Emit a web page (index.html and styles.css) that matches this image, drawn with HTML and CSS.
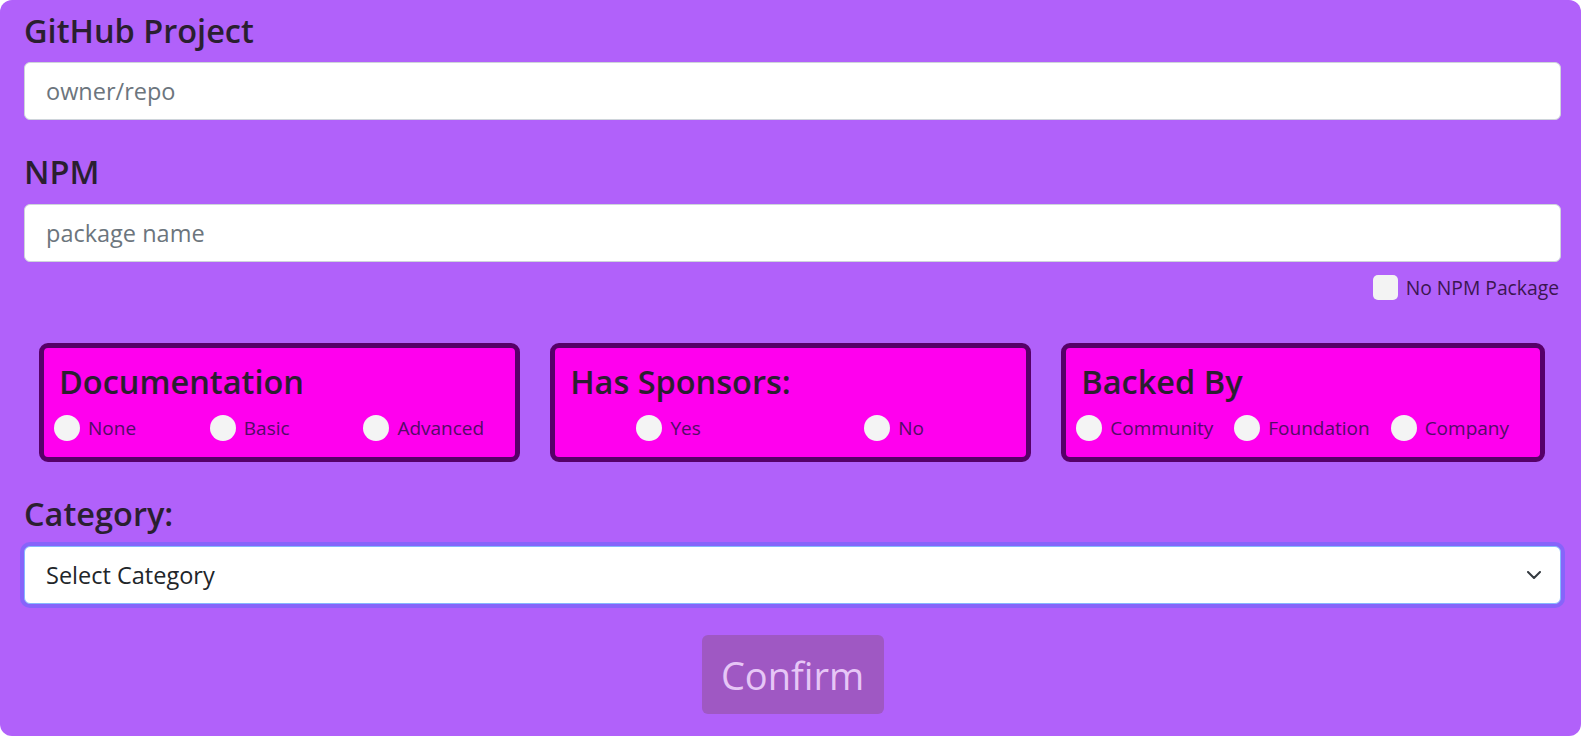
FILE: index.html
```html
<!DOCTYPE html>
<html lang="en">
<head>
<meta charset="utf-8">
<title>Add Project</title>
<link rel="stylesheet" href="styles.css">
</head>
<body>
<form class="card">
  <label class="field-label label-github" for="gh">GitHub Project</label>
  <input class="text-input" id="gh" type="text" placeholder="owner/repo">

  <label class="field-label label-npm" for="npm">NPM</label>
  <input class="text-input" id="npm" type="text" placeholder="package name">

  <div class="check-row">
    <span class="checkbox"></span>
    <span class="check-label">No NPM Package</span>
  </div>

  <div class="boxes">
    <div class="box">
      <div class="box-title">Documentation</div>
      <div class="options options-between">
        <span class="option"><span class="radio"></span>None</span>
        <span class="option"><span class="radio"></span>Basic</span>
        <span class="option"><span class="radio"></span>Advanced</span>
      </div>
    </div>
    <div class="box">
      <div class="box-title">Has Sponsors:</div>
      <div class="options options-around">
        <span class="option"><span class="radio"></span>Yes</span>
        <span class="option"><span class="radio"></span>No</span>
      </div>
    </div>
    <div class="box">
      <div class="box-title">Backed By</div>
      <div class="options options-between">
        <span class="option"><span class="radio"></span>Community</span>
        <span class="option"><span class="radio"></span>Foundation</span>
        <span class="option"><span class="radio"></span>Company</span>
      </div>
    </div>
  </div>

  <label class="field-label label-category" for="cat">Category:</label>
  <div class="select">
    <span class="select-text">Select Category</span>
    <svg class="chevron" width="14" height="8" viewBox="0 0 14 8"><path d="M1 1l6 6 6-6" fill="none" stroke="#343a40" stroke-width="2" stroke-linecap="round" stroke-linejoin="round"/></svg>
  </div>

  <div class="actions">
    <button class="confirm" type="button">Confirm</button>
  </div>
</form>
</body>
</html>
```

FILE: styles.css
```css
html, body {
  margin: 0;
  padding: 0;
  background: #ffffff;
}

body {
  font-family: "Open Sans", "Noto Sans", sans-serif;
  color: #212529;
}

.card {
  display: flex;
  flex-direction: column;
  box-sizing: border-box;
  width: 1581px;
  height: 736px;
  background: #b161fa;
  border-radius: 12px;
  padding: 12px 20px 0 24px;
}

.field-label {
  display: block;
  font-size: 32.5px;
  font-weight: 600;
  line-height: 38px;
  height: 38px;
  color: #2a1f30;
}

.label-github {
  margin-bottom: 12px;
}

.label-npm {
  margin-top: 33px;
  margin-bottom: 13px;
}

.label-category {
  margin-top: 33px;
  margin-bottom: 13px;
}

.text-input {
  display: block;
  box-sizing: border-box;
  width: 100%;
  height: 58px;
  flex: none;
  margin: 0;
  padding: 0 21px;
  border: 1px solid #ced4da;
  border-radius: 6px;
  background: #fff;
  font-family: inherit;
  font-size: 23.5px;
  color: #212529;
  outline: none;
}

.text-input::placeholder {
  color: #6c757d;
}

.check-row {
  display: flex;
  justify-content: flex-end;
  align-items: center;
  gap: 8px;
  height: 25px;
  margin-top: 13px;
  padding-right: 2px;
}

.checkbox {
  display: block;
  width: 25px;
  height: 25px;
  border-radius: 5px;
  background: #f3f3f3;
}

.check-label {
  font-size: 19.3px;
  line-height: 25px;
  color: #3b1650;
}

.boxes {
  display: grid;
  grid-template-columns: 1fr 1fr 1fr;
  column-gap: 30px;
  padding: 0 16px 0 15px;
  margin-top: 43px;
}

.box {
  box-sizing: border-box;
  height: 119px;
  border: 5px solid #560068;
  border-radius: 9px;
  background: #ff00ee;
  padding: 15px 10px 0 10px;
}

.box-title {
  font-size: 32.5px;
  font-weight: 600;
  line-height: 38px;
  height: 38px;
  padding-left: 5px;
  color: #2a1f30;
}

.options {
  display: flex;
  margin-top: 14px;
}

.options-between {
  justify-content: space-between;
}

.options-around {
  justify-content: space-around;
}

.option {
  display: flex;
  align-items: center;
  gap: 8px;
  margin-right: 21px;
  font-size: 19px;
  line-height: 26px;
  color: #520c66;
}

.radio {
  display: block;
  width: 26px;
  height: 26px;
  border-radius: 50%;
  background: #f4f4f4;
}

.select {
  display: flex;
  align-items: center;
  justify-content: space-between;
  box-sizing: border-box;
  height: 58px;
  flex: none;
  padding: 0 19px 0 21px;
  background: #fff;
  border: 1px solid #86b7fe;
  border-radius: 6px;
  box-shadow: 0 0 0 4px rgba(13, 110, 253, 0.25);
}

.select-text {
  font-size: 23.5px;
  color: #212529;
}

.chevron {
  display: block;
}

.actions {
  display: flex;
  justify-content: center;
  margin-top: 31px;
}

.confirm {
  width: 182px;
  height: 79px;
  border: none;
  border-radius: 6px;
  background: #9f58c3;
  color: #e6c6f6;
  font-family: inherit;
  font-size: 38px;
  padding: 0;
}
```
